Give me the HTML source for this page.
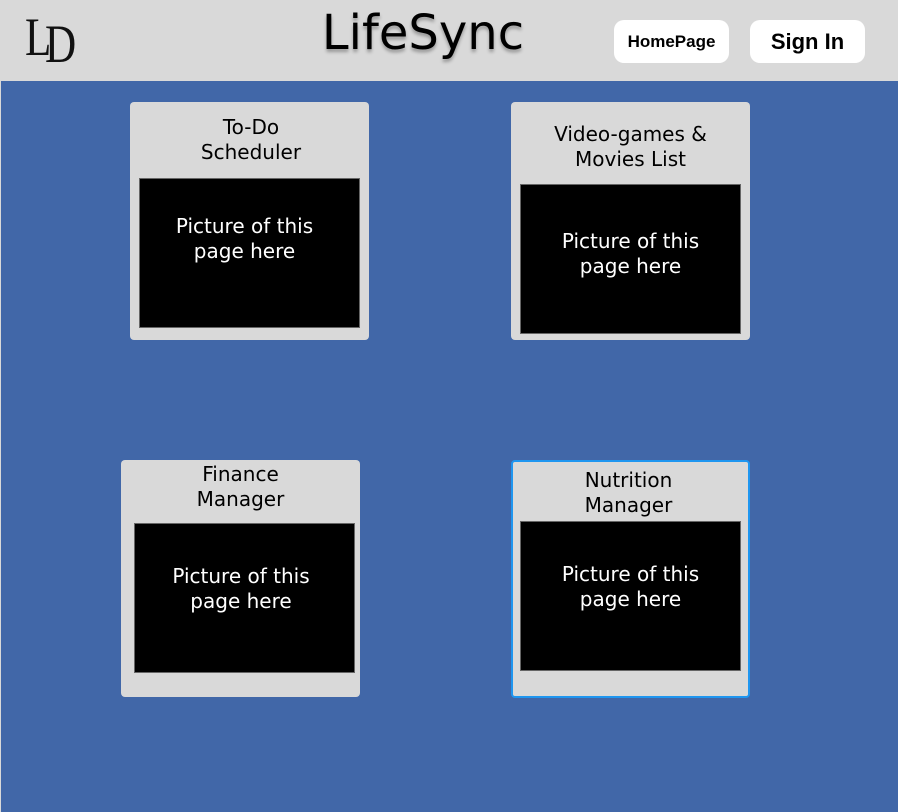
<!DOCTYPE html>
<html><head><style>
*{margin:0;padding:0;box-sizing:border-box}
body{width:898px;height:812px;position:relative;overflow:hidden;background:#d9d9d9;font-family:"DejaVu Sans","Liberation Sans",sans-serif}
#hdr{position:absolute;left:0;top:0;width:898px;height:81px;background:#d9d9d9}
#main{position:absolute;left:1px;top:81px;width:897px;height:731px;background:#4167a8}
.lg{position:absolute;font-family:"Liberation Serif",serif;font-size:54px;color:#111;line-height:54px;transform:scaleX(0.8);transform-origin:left}
.title{position:absolute;left:0;width:846px;top:5px;text-align:center;font-family:"DejaVu Sans",sans-serif;font-size:48px;color:#000;text-shadow:0 3px 3px rgba(0,0,0,.3)}
.btn{position:absolute;top:20px;height:43px;background:#fff;border-radius:10px;display:flex;align-items:center;justify-content:center;font-family:"Liberation Sans",sans-serif;font-weight:bold;color:#000}
.card{position:absolute;width:239px;background:#d9d9d9;border-radius:4px}
.t{position:absolute;left:0;width:100%;text-align:center;font-size:20px;line-height:25px;color:#000}
.pic{position:absolute;width:221px;height:150px;background:#000;border:1px solid #666;color:#fff;text-align:center;font-size:20px;line-height:25px}
</style></head><body>
<div id="hdr">
<div class="lg" style="left:25px;top:10px">L</div>
<div class="lg" style="left:45px;top:17px">D</div>
<div class="title">LifeSync</div>
<div class="btn" style="left:614px;width:115px;font-size:17px">HomePage</div>
<div class="btn" style="left:750px;width:115px;font-size:22px">Sign In</div>
</div>
<div id="main"></div>

<div class="card" style="left:130px;top:102px;height:238px">
<div class="t" style="top:13px;padding-left:3px">To-Do<br>Scheduler</div>
</div>
<div class="pic" style="left:139px;top:178px;padding-top:35px;padding-right:10px">Picture of this<br>page here</div>

<div class="card" style="left:511px;top:102px;height:238px">
<div class="t" style="top:20px">Video-games &amp;<br>Movies List</div>
</div>
<div class="pic" style="left:520px;top:184px;padding-top:44px">Picture of this<br>page here</div>

<div class="card" style="left:121px;top:460px;height:237px">
<div class="t" style="top:2px">Finance<br>Manager</div>
</div>
<div class="pic" style="left:134px;top:523px;padding-top:40px;padding-right:7px">Picture of this<br>page here</div>

<div class="card" style="left:511px;top:460px;height:238px;border:2px solid #1e96f0">
<div class="t" style="top:6px;left:-2px">Nutrition<br>Manager</div>
</div>
<div class="pic" style="left:520px;top:521px;padding-top:40px">Picture of this<br>page here</div>
</body></html>
